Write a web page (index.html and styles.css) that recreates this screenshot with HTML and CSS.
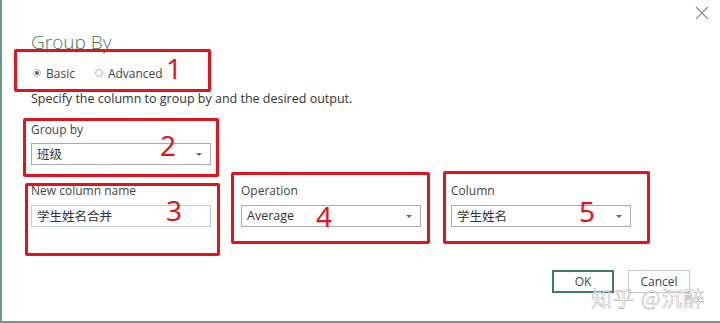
FILE: index.html
```html
<!DOCTYPE html>
<html>
<head>
<meta charset="utf-8">
<link rel="stylesheet" href="styles.css">
</head>
<body>
<div class="dialog">
  <div class="close">
    <svg width="14" height="14" viewBox="0 0 14 14"><path d="M1 1 L13 13 M13 1 L1 13" stroke="#8a8a8a" stroke-width="1.1" fill="none"/></svg>
  </div>
  <h1 class="title">Group By</h1>
  <div class="radios">
    <label class="radio"><span class="dot on"></span>Basic</label>
    <label class="radio"><span class="dot"></span>Advanced</label>
  </div>
  <p class="desc">Specify the column to group by and the desired output.</p>
  <div class="field">
    <div class="label">Group by</div>
    <div class="select cjk">班级<span class="caret"></span></div>
  </div>
  <div class="row">
    <div class="field">
      <div class="label">New column name</div>
      <div class="input cjk">学生姓名合并</div>
    </div>
    <div class="field">
      <div class="label">Operation</div>
      <div class="select">Average<span class="caret"></span></div>
    </div>
    <div class="field">
      <div class="label">Column</div>
      <div class="select cjk">学生姓名<span class="caret"></span></div>
    </div>
  </div>
  <div class="buttons">
    <button class="btn ok">OK</button>
    <button class="btn">Cancel</button>
  </div>

  <div class="mark m1"><span class="num n1">1</span></div>
  <div class="mark m2"><span class="num n2">2</span></div>
  <div class="mark m3"><span class="num n3">3</span></div>
  <div class="mark m4"><span class="num n4">4</span></div>
  <div class="mark m5"><span class="num n5">5</span></div>
  <div class="watermark">知乎 @沉醉</div>
</div>
</body>
</html>
```
FILE: styles.css
```css
html, body {
  margin: 0;
  padding: 0;
  background: #fff;
}
.dialog {
  position: relative;
  width: 718px;
  height: 321px;
  border-left: 2px solid #6b9a86;
  border-bottom: 2px solid #6b9a86;
  font-family: "Open Sans", "Noto Sans CJK SC", sans-serif;
  font-size: 12px;
  color: #444;
  overflow: hidden;
}
.cjk {
  font-family: "Noto Sans CJK SC", sans-serif;
}
.close {
  position: absolute;
  right: 11px;
  top: 6px;
  line-height: 0;
}
.title {
  margin: 0;
  padding: 30px 0 0 29px;
  font-size: 19px;
  font-weight: 300;
  color: #3f7d5f;
  line-height: 24px;
  height: 32px;
}
.radios {
  display: flex;
  gap: 20px;
  padding-left: 31px;
  margin-top: 0;
  height: 22px;
  align-items: center;
}
.radio {
  display: flex;
  align-items: center;
  gap: 5px;
  color: #444;
}
.dot {
  width: 8px;
  height: 8px;
  border: 1px solid #b8b8b8;
  border-radius: 50%;
  display: inline-flex;
  align-items: center;
  justify-content: center;
  box-sizing: border-box;
}
.dot.on::after {
  content: "";
  width: 4px;
  height: 4px;
  border-radius: 50%;
  background: #666;
}
.desc {
  margin: 0;
  padding-left: 29px;
  margin-top: 6px;
  font-size: 12.5px;
  line-height: 18px;
  color: #333;
}
.field {
  display: flex;
  flex-direction: column;
  padding-left: 29px;
  width: 180px;
}
.dialog > .field {
  margin-top: 14px;
}
.dialog > .field .label {
  margin-bottom: 5px;
}
.label {
  line-height: 16px;
  height: 16px;
  margin-bottom: 6px;
}
.select, .input {
  position: relative;
  height: 20px;
  border: 1px solid #aaa;
  line-height: 20px;
  padding-left: 5px;
  font-size: 12.5px;
  color: #333;
}
.input {
  border-color: #b7d4c4;
}
.caret {
  position: absolute;
  right: 8px;
  top: 9px;
  width: 0;
  height: 0;
  border-left: 3px solid transparent;
  border-right: 3px solid transparent;
  border-top: 3px solid #666;
}
.row {
  display: flex;
  margin-top: 18px;
}
.row .field {
  padding-left: 0;
  width: 180px;
  margin-right: 30px;
}
.row .field:first-child {
  margin-left: 29px;
}
.buttons {
  display: flex;
  justify-content: flex-end;
  gap: 14px;
  margin-top: 43px;
  padding-right: 30px;
}
.btn {
  width: 62px;
  height: 23px;
  background: #fff;
  border: 1px solid #c6c6c6;
  font-family: "Open Sans", sans-serif;
  font-size: 12px;
  color: #444;
  padding: 0;
}
.btn.ok {
  border: 2px solid #3f7d5f;
}
.mark {
  position: absolute;
  border: 3px solid #e0141c;
  border-radius: 2px;
}
.m1 { left: 12px; top: 49px; width: 191px; height: 37px; }
.m2 { left: 21px; top: 118px; width: 190px; height: 53px; }
.m3 { left: 23px; top: 183px; width: 189px; height: 67px; }
.m4 { left: 229px; top: 172px; width: 193px; height: 66px; }
.m5 { left: 441px; top: 171px; width: 201px; height: 67px; }
.num {
  position: absolute;
  font-family: "Noto Sans", sans-serif;
  font-size: 28px;
  line-height: 28px;
  color: #e0141c;
}
.n1 { left: 149px; top: 2px; }
.n2 { left: 134px; top: 10px; }
.n3 { left: 138px; top: 10px; }
.n4 { left: 82px; top: 27px; }
.n5 { left: 133px; top: 23px; }
.watermark {
  position: absolute;
  left: 589px;
  top: 282px;
  font-family: "Noto Sans CJK SC", sans-serif;
  font-size: 21px;
  color: rgba(255,255,255,0.75);
  -webkit-text-stroke: 0.6px rgba(120,120,120,0.55);
  letter-spacing: 1px;
}
```
